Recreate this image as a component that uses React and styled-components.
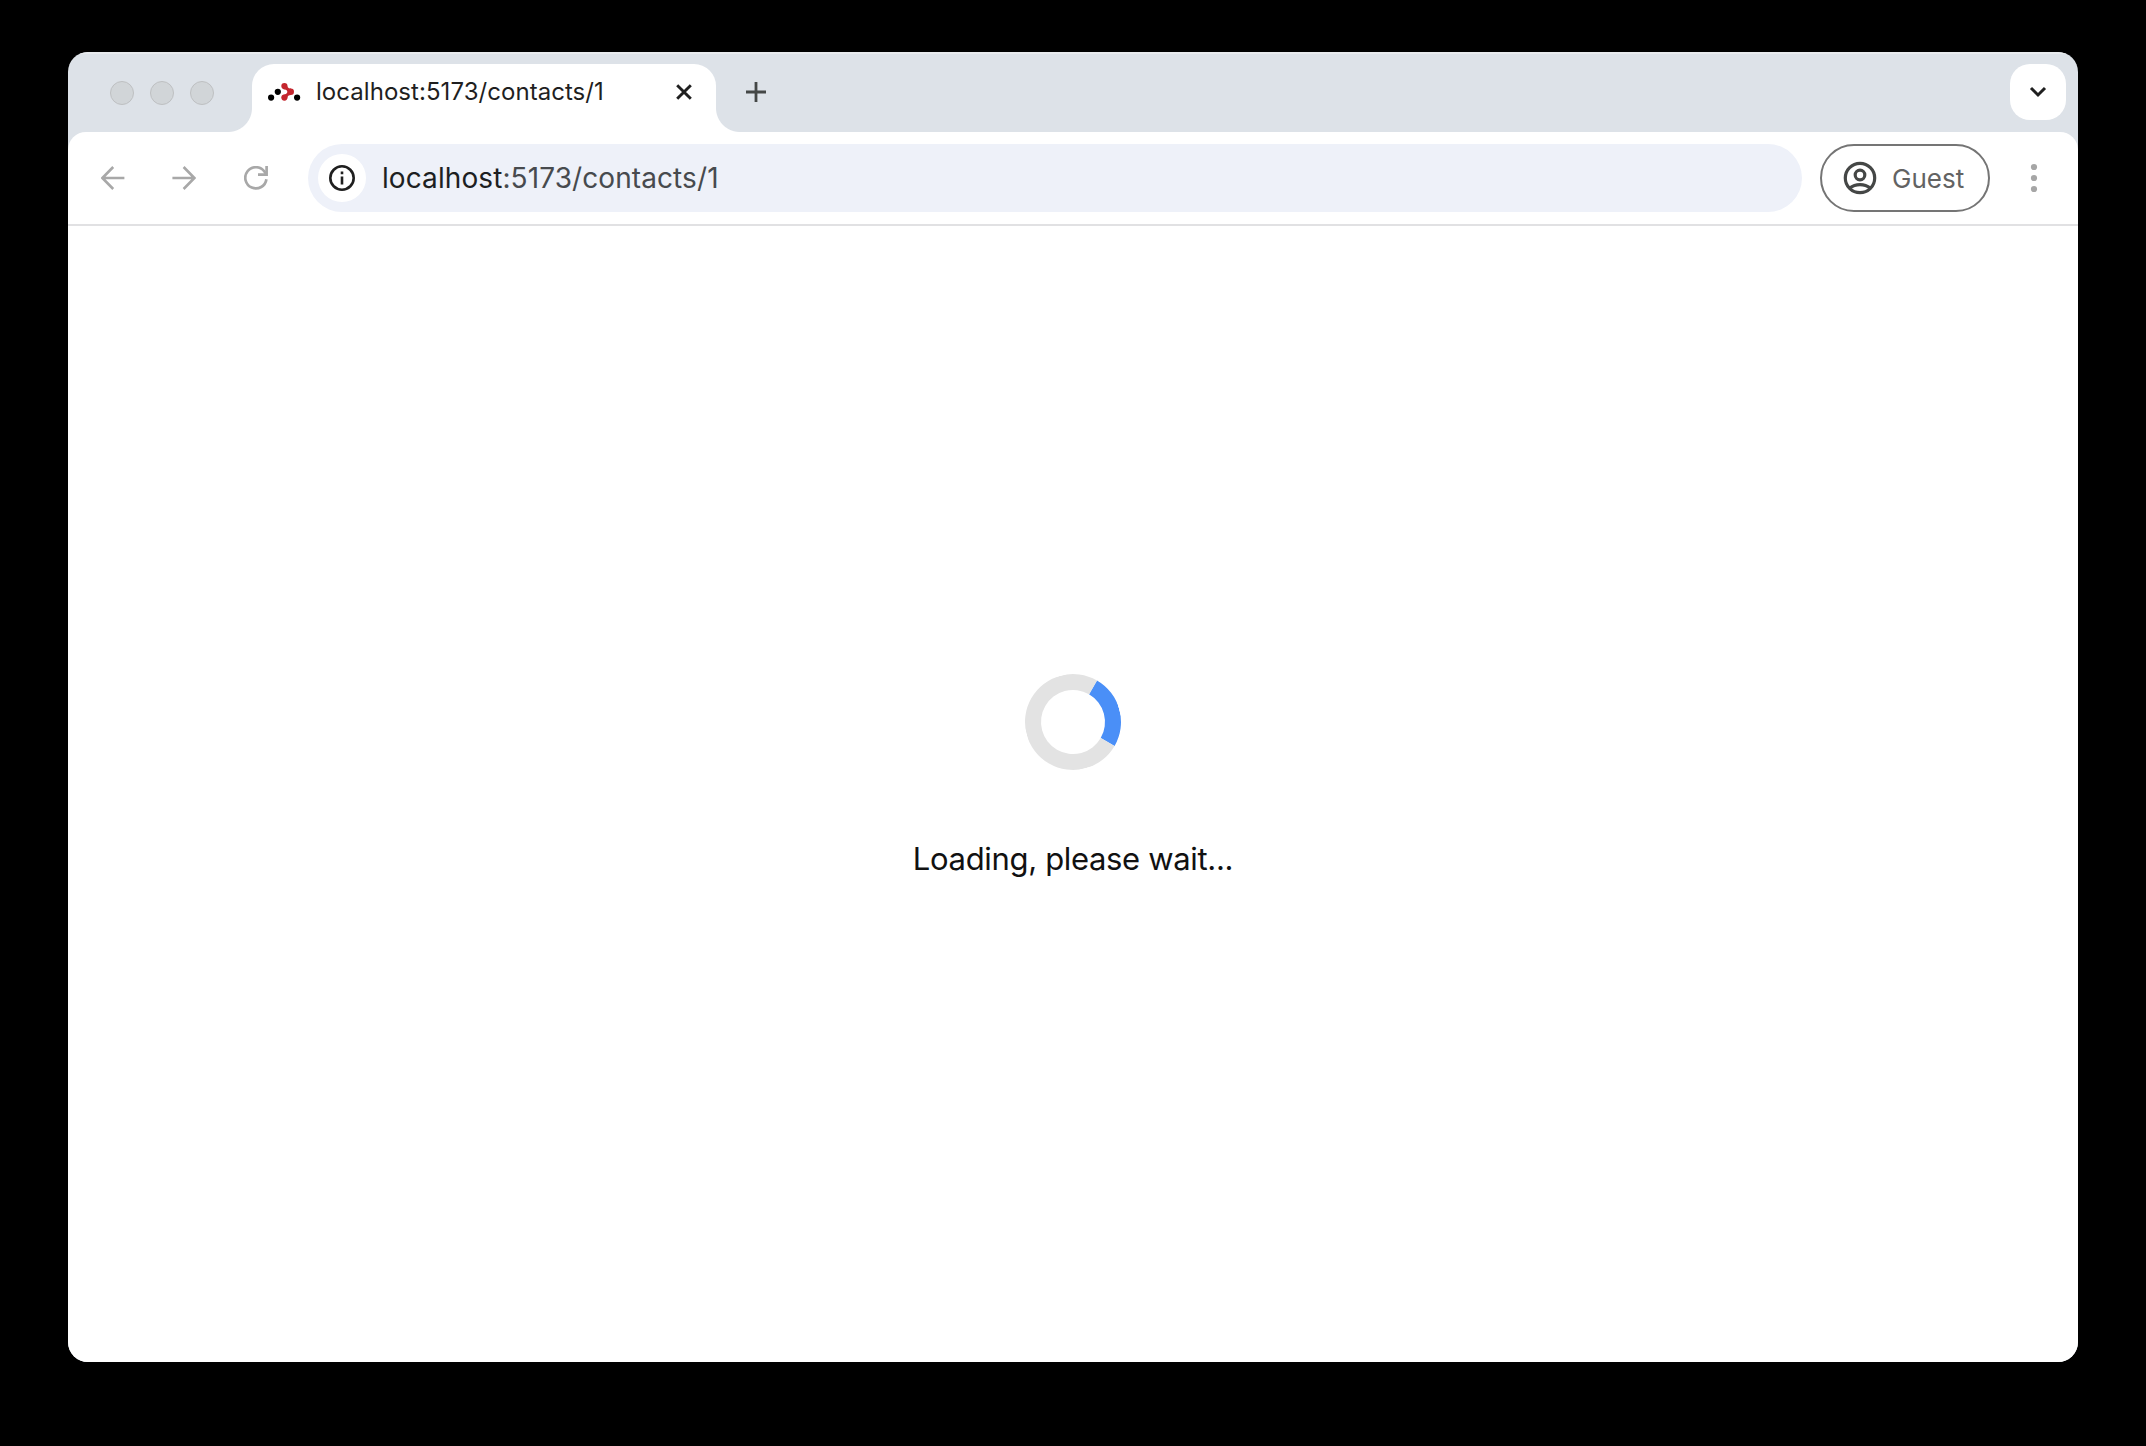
import React from 'react';
import styled, { createGlobalStyle } from 'styled-components';

const GlobalStyle = createGlobalStyle`
  * { box-sizing: border-box; }
  body { margin: 0; background: #000; }
  button { margin: 0; padding: 0; border: 0; background: none; font: inherit; color: inherit; }
`;

const Desktop = styled.div`
  width: 2146px;
  height: 1446px;
  padding: 52px 68px 84px;
  background: #000;
  font-family: Inter, "Liberation Sans", sans-serif;
`;

const Window = styled.div`
  display: flex;
  flex-direction: column;
  width: 2010px;
  height: 1310px;
  border-radius: 20px;
  overflow: hidden;
  background: #dde2e8;
`;

const TabStrip = styled.header`
  display: flex;
  flex: none;
  height: 80px;
  box-shadow: inset 0 2px 0 #e8ebee;
`;

const TrafficLights = styled.div`
  display: flex;
  gap: 16px;
  width: 184px;
  padding: 29px 0 0 42px;
`;

const Light = styled.span`
  width: 24px;
  height: 24px;
  border: 1px solid #bec0c2;
  border-radius: 50%;
  background: #d1d5d8;
`;

const Tab = styled.div`
  position: relative;
  display: flex;
  align-items: center;
  width: 464px;
  height: 68px;
  margin-top: 12px;
  padding: 0 23px 12px 16px;
  border-radius: 22px 22px 0 0;
  background: #fff;

  &::before,
  &::after {
    content: "";
    position: absolute;
    bottom: 0;
    width: 24px;
    height: 24px;
  }
  &::before {
    right: 100%;
    background: radial-gradient(circle at 0 0, transparent 23.5px, #fff 24.5px);
  }
  &::after {
    left: 100%;
    background: radial-gradient(circle at 100% 0, transparent 23.5px, #fff 24.5px);
  }
`;

const TabTitle = styled.span`
  margin-left: 15px;
  flex: 1;
  font-size: 24px;
  line-height: 32px;
  letter-spacing: ${(p) => p.$tracking};
  color: #1f1f1f;
  white-space: nowrap;
`;

const IconButton = styled.button`
  display: flex;
  flex: none;
  align-items: center;
  justify-content: center;
  width: ${(p) => p.$width}px;
  height: ${(p) => p.$height || p.$width}px;
  color: ${(p) => p.$color};
`;

const NewTab = styled(IconButton)`
  margin: 20px 0 0 20px;
`;

const TabSearch = styled(IconButton)`
  margin: 12px 12px 0 auto;
  border-radius: 20px;
  background: #fff;
`;

const Toolbar = styled.nav`
  display: flex;
  flex: none;
  align-items: center;
  height: 94px;
  padding: 0 20px 2px 20px;
  border-radius: 18px 18px 0 0;
  background: #fff;
  box-shadow: inset 0 -2px 0 #e1e1e3;
`;

const NavButtons = styled.div`
  display: flex;
  flex: none;
  gap: 22px;
  width: 220px;
`;

const AddressBar = styled.div`
  display: flex;
  flex: none;
  align-items: center;
  width: 1494px;
  height: 68px;
  padding: 0 10px;
  border-radius: 34px;
  background: #eef1f9;
`;

const SiteInfo = styled(IconButton)`
  border-radius: 50%;
  background: #fff;
`;

const Url = styled.span`
  margin-left: 16px;
  font-size: 28px;
  line-height: 36px;
  letter-spacing: ${(p) => p.$tracking};
  color: #474a4e;
`;

const Host = styled.span`
  color: #1d1f22;
`;

const Profile = styled.button`
  display: flex;
  flex: none;
  align-items: center;
  gap: 15px;
  width: 170px;
  height: 68px;
  margin-left: 18px;
  padding-left: 21px;
  border: 2px solid #757575;
  border-radius: 34px;
  color: #454746;
`;

const ProfileName = styled.span`
  padding-top: 2px;
  font-size: 26px;
  line-height: 36px;
  letter-spacing: ${(p) => p.$tracking};
  color: #636363;
`;

const MenuButton = styled(IconButton)`
  margin-left: 20px;
`;

const Page = styled.main`
  display: flex;
  flex: 1;
  flex-direction: column;
  align-items: center;
  padding-top: 448px;
  background: #fff;
`;

const Spinner = styled.div`
  width: 96px;
  height: 96px;
  border: 16px solid #e3e3e3;
  border-top-color: #4a8ff7;
  border-radius: 50%;
  transform: rotate(75deg);
`;

const Message = styled.p`
  margin: 65px 0 0;
  font-size: 31px;
  line-height: 48px;
  letter-spacing: ${(p) => p.$tracking};
  color: #111;
`;

const Favicon = () => (
  <svg width="33" height="24" viewBox="0 0 33 24">
    <circle cx="3.1" cy="17.6" r="3.1" />
    <circle cx="9.8" cy="11.8" r="3.1" />
    <circle cx="29.1" cy="17.6" r="3.1" />
    <g fill="#c4262e">
      <circle cx="16.4" cy="6.1" r="3.1" />
      <path d="M18.9 4.4 C19.2 7.8 21.2 8.5 23 8.6 V15 C21 15.2 19.2 15.8 19 18.6 L14.8 14.9 C17.8 14.5 19.4 13.1 19.5 11.8 C19.4 10.5 18 9.2 15 8.9 Z" />
      <circle cx="22.8" cy="11.8" r="3.2" />
      <circle cx="16.4" cy="17.6" r="3.1" />
    </g>
  </svg>
);

const CloseIcon = () => (
  <svg width="18" height="18" viewBox="0 0 18 18" fill="none" stroke="currentColor" strokeWidth="2.9">
    <path d="M2.2 2.2 L15.8 15.8 M15.8 2.2 L2.2 15.8" />
  </svg>
);

const PlusIcon = () => (
  <svg width="20" height="20" viewBox="0 0 20 20" fill="none" stroke="currentColor" strokeWidth="2.8">
    <path d="M10 0 V20 M0 10 H20" />
  </svg>
);

const ChevronIcon = () => (
  <svg width="18" height="12" viewBox="0 0 18 12" fill="none" stroke="currentColor" strokeWidth="3">
    <path d="M2 2 L9 9 L16 2" />
  </svg>
);

const BackIcon = () => (
  <svg width="24" height="24" viewBox="0 0 24 24" fill="none" stroke="currentColor" strokeWidth="2.6">
    <path d="M23.4 12 H1.8 M12.2 1 L1.4 12 L12.2 23" />
  </svg>
);

const ForwardIcon = () => (
  <svg width="24" height="24" viewBox="0 0 24 24" fill="none" stroke="currentColor" strokeWidth="2.6">
    <path d="M0.4 12 H22 M11.6 1 L22.4 12 L11.6 23" />
  </svg>
);

const ReloadIcon = () => (
  <svg width="24" height="24" viewBox="0 0 24 24" fill="none" stroke="currentColor" strokeWidth="2.7">
    <path d="M22.4 13.2 A10.6 10.6 0 1 1 20.4 5.5 L22.4 8.4" />
    <path d="M22.6 0 V8.6 H14" />
  </svg>
);

const InfoIcon = () => (
  <svg width="26" height="26" viewBox="0 0 26 26" fill="none" stroke="currentColor">
    <circle cx="13" cy="13" r="11.7" strokeWidth="2.6" />
    <path d="M13 11.4 V19.4 M13 6.6 V9.2" strokeWidth="2.6" />
  </svg>
);

const PersonIcon = () => (
  <svg width="34" height="34" viewBox="0 0 34 34" fill="none" stroke="currentColor" strokeWidth="3.2">
    <circle cx="17" cy="17" r="14.7" />
    <circle cx="17" cy="14" r="4.8" />
    <path d="M6.8 27 C12.4 22.4 21.6 22.4 27.2 27" />
  </svg>
);

const MoreIcon = () => (
  <svg width="8" height="30" viewBox="0 0 8 30" fill="currentColor">
    <circle cx="4" cy="4" r="3.1" />
    <circle cx="4" cy="15" r="3.1" />
    <circle cx="4" cy="26" r="3.1" />
  </svg>
);

export default function App() {
  return (
    <>
      <GlobalStyle />
      <Desktop>
        <Window>
          <TabStrip>
            <TrafficLights>
              <Light />
              <Light />
              <Light />
            </TrafficLights>
            <Tab>
              <Favicon />
              <TabTitle $tracking="0.05px">localhost:5173/contacts/1</TabTitle>
              <IconButton $width={18} $color="#1f1f1f" aria-label="Close tab"><CloseIcon /></IconButton>
            </Tab>
            <NewTab $width={40} $color="#444746" aria-label="New tab"><PlusIcon /></NewTab>
            <TabSearch $width={56} $color="#1f1f1f" aria-label="Search tabs"><ChevronIcon /></TabSearch>
          </TabStrip>
          <Toolbar>
            <NavButtons>
              <IconButton $width={49} $color="#a8a8a8" aria-label="Back"><BackIcon /></IconButton>
              <IconButton $width={49} $color="#a8a8a8" aria-label="Forward"><ForwardIcon /></IconButton>
              <IconButton $width={51} $height={49} $color="#a8a8a8" aria-label="Reload"><ReloadIcon /></IconButton>
            </NavButtons>
            <AddressBar>
              <SiteInfo $width={48} $color="#1f1f1f" aria-label="Site information"><InfoIcon /></SiteInfo>
              <Url $tracking="0.09px"><Host>localhost</Host>:5173/contacts/1</Url>
            </AddressBar>
            <Profile>
              <PersonIcon />
              <ProfileName $tracking="0px">Guest</ProfileName>
            </Profile>
            <MenuButton $width={48} $color="#a6a6a6" aria-label="Menu"><MoreIcon /></MenuButton>
          </Toolbar>
          <Page>
            <Spinner />
            <Message $tracking="-0.33px">Loading, please wait...</Message>
          </Page>
        </Window>
      </Desktop>
    </>
  );
}
